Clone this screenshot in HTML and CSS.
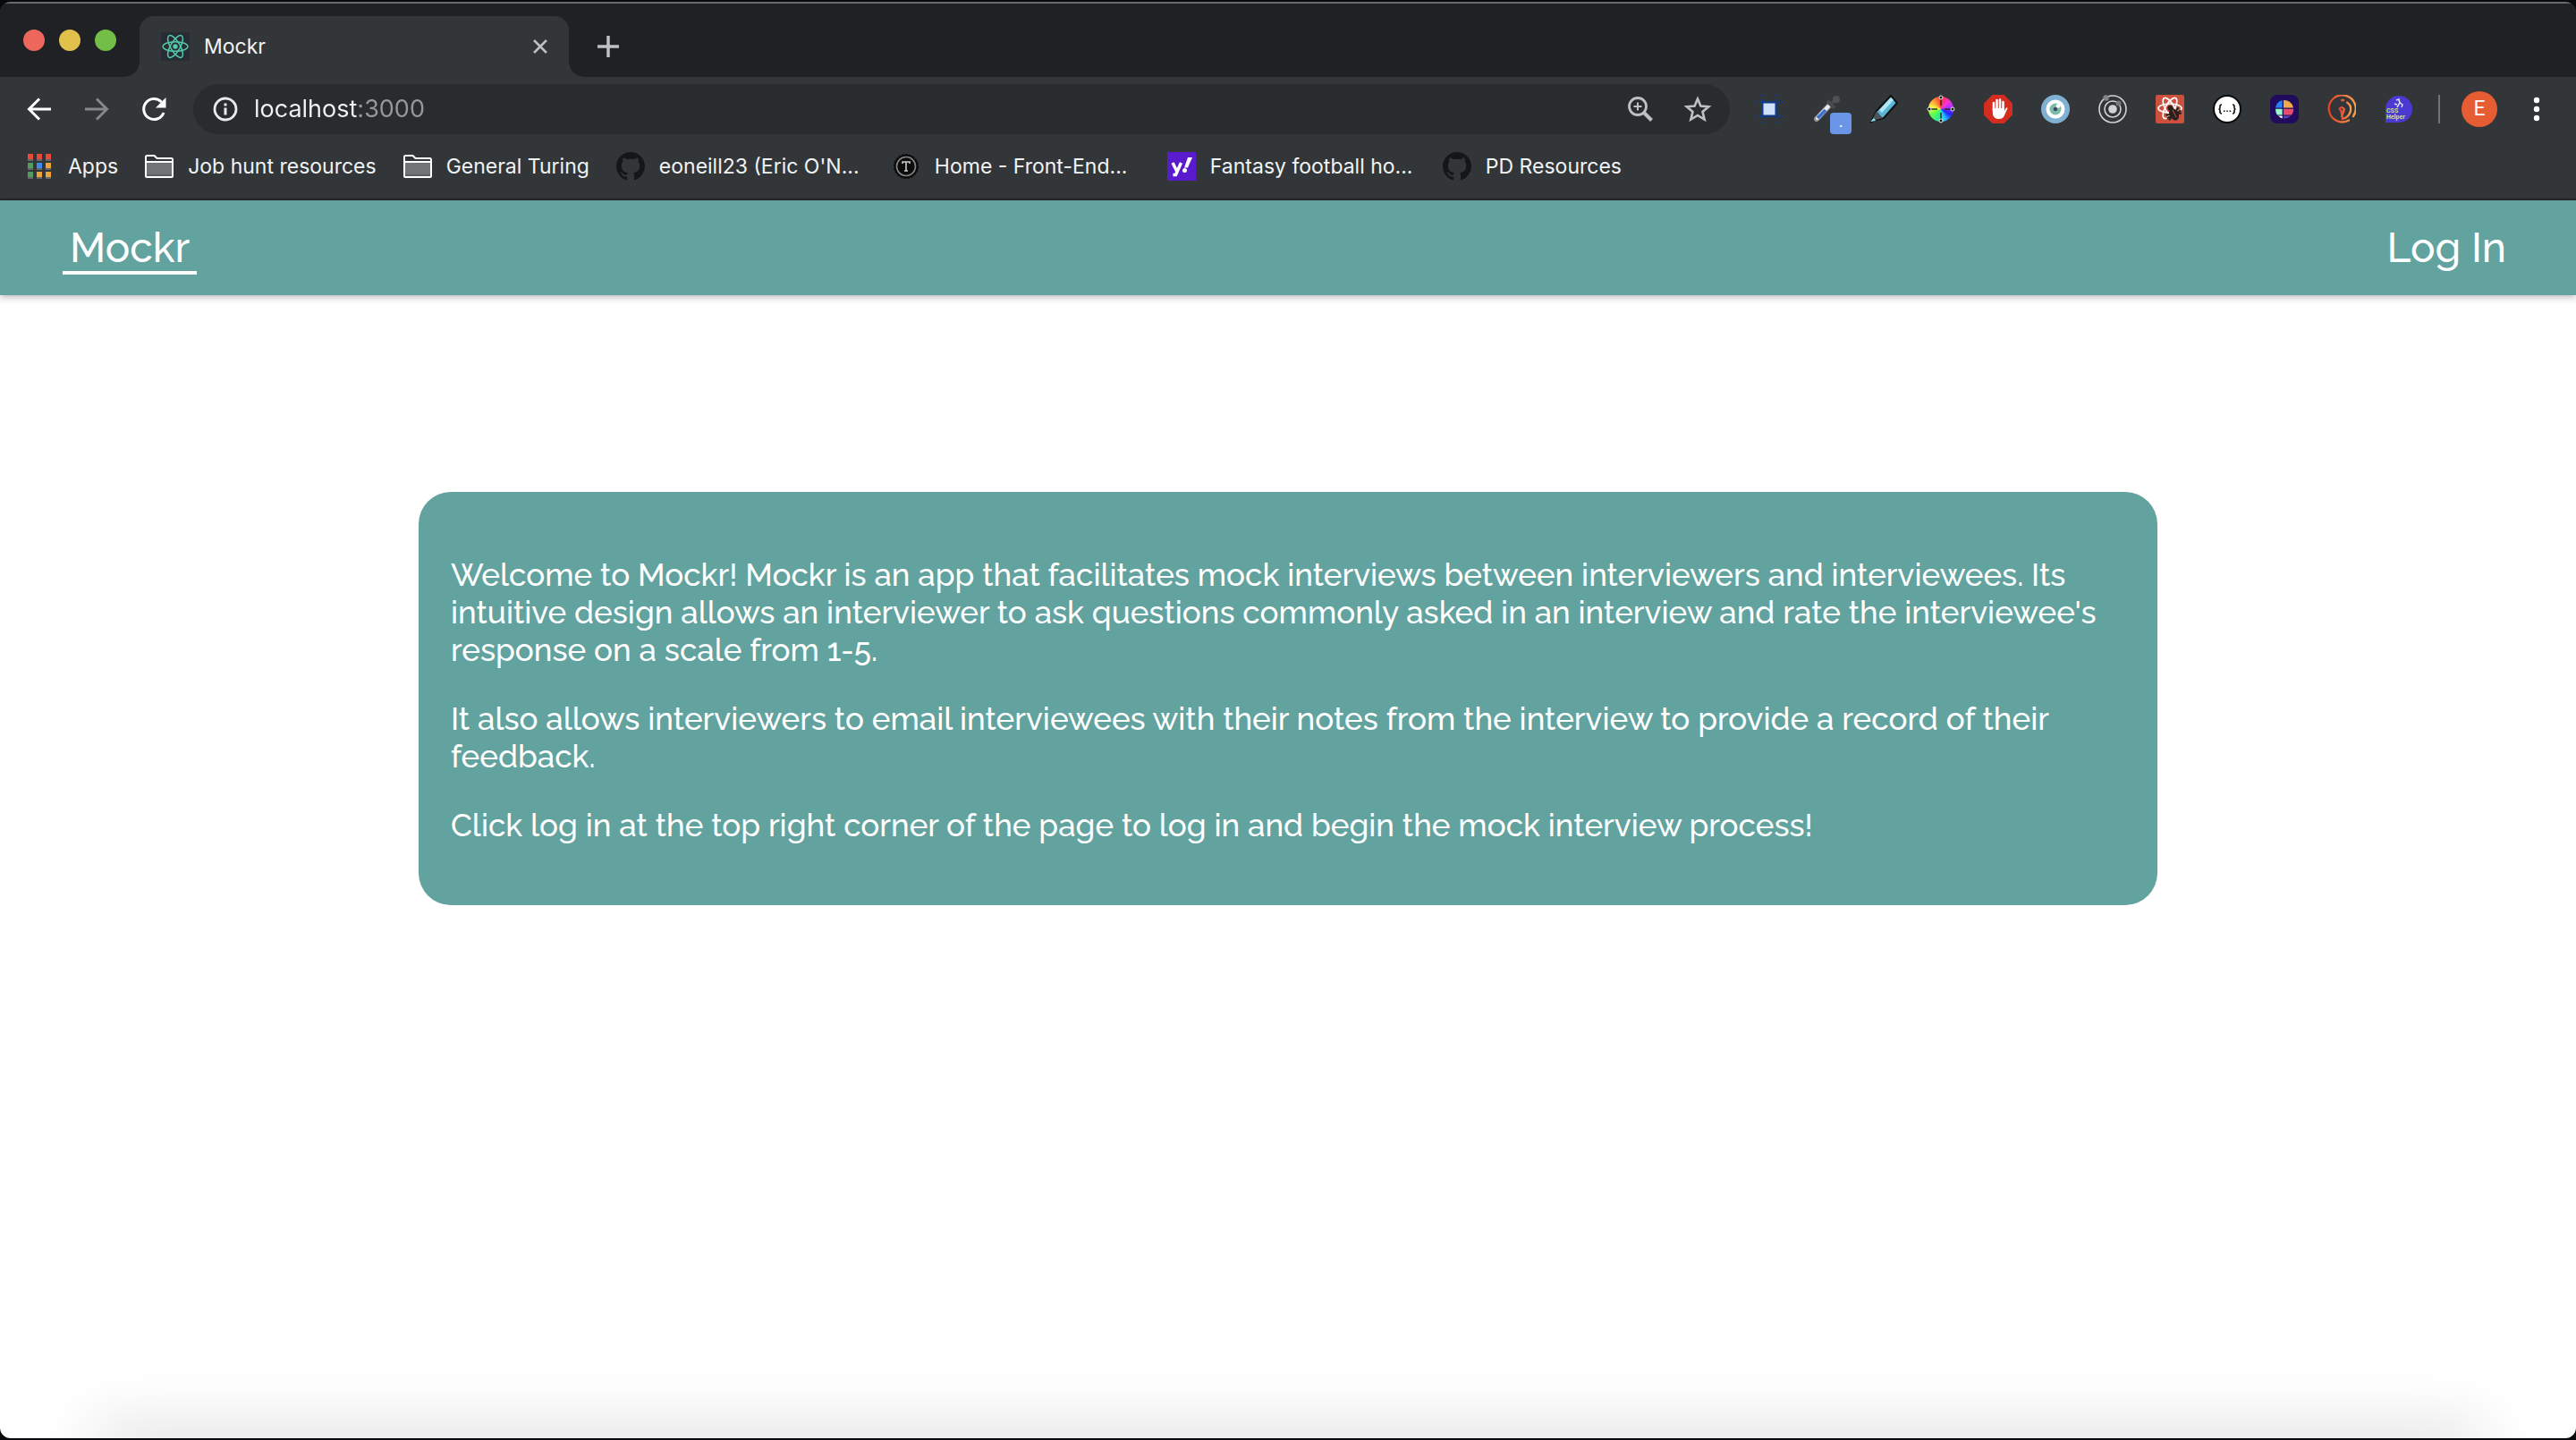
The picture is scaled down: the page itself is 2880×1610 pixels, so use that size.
FILE: index.html
```html
<!DOCTYPE html>
<html lang="en">
<head>
<meta charset="utf-8">
<meta name="viewport" content="width=device-width, initial-scale=1">
<title>Mockr</title>
<link rel="stylesheet" href="styles.css">
</head>
<body>
<svg class="sprite" aria-hidden="true">
  <symbol id="octocat" viewBox="0 0 16 16"><path d="M8 0C3.58 0 0 3.58 0 8c0 3.54 2.29 6.53 5.47 7.59.4.07.55-.17.55-.38 0-.19-.01-.82-.01-1.49-2.01.37-2.53-.49-2.69-.94-.09-.23-.48-.94-.82-1.13-.28-.15-.68-.52-.01-.53.63-.01 1.08.58 1.23.82.72 1.21 1.87.87 2.33.66.07-.52.28-.87.51-1.07-1.78-.2-3.64-.89-3.64-3.95 0-.87.31-1.59.82-2.15-.08-.2-.36-1.02.08-2.12 0 0 .67-.21 2.2.82.64-.18 1.32-.27 2-.27s1.36.09 2 .27c1.53-1.04 2.2-.82 2.2-.82.44 1.1.16 1.92.08 2.12.51.56.82 1.27.82 2.15 0 3.07-1.87 3.75-3.65 3.95.29.25.54.73.54 1.48 0 1.07-.01 1.93-.01 2.2 0 .21.15.46.55.38A8.01 8.01 0 0 0 16 8c0-4.42-3.58-8-8-8z" fill="#161616"/></symbol>
  <symbol id="folder" viewBox="0 0 32 32"><path d="M1 27V5.500q0-1.500 1.500-1.500h8l3 3H29.500q1.500 0 1.500 1.500V27q0 1-1 1H2q-1 0-1-1z" fill="#323639"/><path d="M2 11h28v16H2z" fill="#707477"/><path d="M2 25h28v2H2z" fill="#5c5f62"/><path d="M1 27V5.500q0-1.500 1.500-1.500h8l3 3H29.500q1.500 0 1.500 1.500V27q0 1-1 1H2q-1 0-1-1zM1 11h30" fill="none" stroke="#fff" stroke-width="2"/></symbol>
</svg>
<div class="window">
  <div class="tabstrip">
    <div class="lights">
      <button class="light light-close" aria-label="Close window"></button>
      <button class="light light-min" aria-label="Minimize window"></button>
      <button class="light light-max" aria-label="Zoom window"></button>
    </div>
    <div class="tab">
      <svg class="icon" viewBox="0 0 32 32"><path d="M0 0h32v32H0z" fill="#282c34"/><g fill="none" stroke="#53c9a8" stroke-width="1.500"><ellipse cx="16" cy="16" rx="14" ry="5.300"/><ellipse cx="16" cy="16" rx="14" ry="5.300" transform="rotate(60 16 16)"/><ellipse cx="16" cy="16" rx="14" ry="5.300" transform="rotate(120 16 16)"/></g><circle cx="16" cy="16" r="2.700" fill="#53c9a8"/></svg>
      <span class="tab-title">Mockr</span>
      <button class="tab-close" aria-label="Close tab"><svg viewBox="0 0 16 16" width="16" height="16"><path d="M1 1l14 14M15 1L1 15" stroke="#bdc1c4" stroke-width="2.500"/></svg></button>
    </div>
    <button class="new-tab" aria-label="New tab"><svg viewBox="0 0 24 24" width="24" height="24"><path d="M12 0v24M0 12h24" stroke="#bdc1c4" stroke-width="3.500"/></svg></button>
  </div>

  <div class="toolbar">
    <nav class="nav-buttons" aria-label="History">
      <button class="tool" aria-label="Back"><svg class="icon" viewBox="0 0 32 32"><path d="M29 16H5M16 4.500L4.500 16 16 27.500" fill="none" stroke="#fff" stroke-width="3"/></svg></button>
      <button class="tool" aria-label="Forward"><svg class="icon" viewBox="0 0 32 32"><path d="M3 16h24M16 4.500L27.500 16 16 27.500" fill="none" stroke="#85888a" stroke-width="3"/></svg></button>
      <button class="tool" aria-label="Reload"><svg class="icon" viewBox="0 0 32 32"><path d="M27 20A11.500 11.500 0 1 1 24.500 8" fill="none" stroke="#fff" stroke-width="3"/><path d="M29.500 3v11.500H18z" fill="#fff"/></svg></button>
    </nav>
    <div class="omnibox">
      <svg class="icon" viewBox="0 0 32 32"><circle cx="16" cy="16" r="12" fill="none" stroke="#e8eaed" stroke-width="2.800"/><path d="M14.500 9.500h3v3h-3zM14.500 14.500h3v8h-3z" fill="#e8eaed"/></svg>
      <input class="url" type="text" value="localhost:3000" aria-label="Address">
      <button class="tool" aria-label="Zoom"><svg class="icon" viewBox="0 0 32 32"><g fill="none" stroke="#bdc1c4" stroke-width="2.800"><circle cx="13" cy="13" r="9.500"/><path d="M20 20l8.500 8.500" stroke-width="4"/><path d="M13 8.500v9M8.500 13h9" stroke-width="2"/></g></svg></button>
      <button class="tool" aria-label="Bookmark this page"><svg class="icon" viewBox="0 0 32 32"><path d="M16 4.500l3.400 8 8.800.7-6.700 5.700 2.100 8.600L16 23l-7.600 4.500 2.100-8.600-6.700-5.700 8.800-.7z" fill="none" stroke="#bdc1c4" stroke-width="2.600"/></svg></button>
    </div>
    <div class="extensions">
      <button class="tool" aria-label="Box model"><svg class="icon" viewBox="0 0 32 32"><path d="M8 0v32M24 0v32M0 8h32M0 24h32" stroke="#0c3b8c" stroke-width="2" stroke-dasharray="2 3"/><path d="M8.500 8.500h15v15h-15z" fill="#cfe0fb" stroke="#0c3b8c" stroke-width="2"/></svg></button>
      <button class="tool" aria-label="Color picker"><svg class="icon" viewBox="0 0 32 32"><path d="M5 27L20 11" stroke="#92969b" stroke-width="6" stroke-linecap="round"/><path d="M6 26L18 13" stroke="#e9edf2" stroke-width="4" stroke-linecap="round"/><path d="M6 26l9-9" stroke="#3d70ce" stroke-width="3.500"/><path d="M17 7l8 8M20 12l6-7" stroke="#4a4a4a" stroke-width="4"/><circle cx="27" cy="5" r="4" fill="#515151"/></svg><span class="badge">.</span></button>
      <button class="tool" aria-label="Highlighter"><svg class="icon" viewBox="0 0 32 32"><path d="M8 18L24 1l7 8-15 17-9 2-5 2z" fill="#58b6d8" stroke="#111" stroke-width="2"/><path d="M11 17L24 3l3 3-13 14z" fill="#b4e5f3"/><path d="M8 18l7 8-8 2-5 2z" fill="#4c555c"/><path d="M1 30l4-4 2 3z" fill="#8eeaf4"/></svg></button>
      <button class="tool" aria-label="Color wheel"><span class="wheel"></span><svg class="icon wheel-marks" viewBox="0 0 32 32"><path d="M16 3v9M16 20v9M3 16h9M20 16h9" stroke="#222" stroke-opacity=".7" stroke-width="2"/><g fill="#111" stroke="#eee"><circle cx="16" cy="3" r="2"/><circle cx="16" cy="29" r="2"/><circle cx="3" cy="16" r="2"/><circle cx="29" cy="16" r="2"/></g></svg></button>
      <button class="tool" aria-label="Ad blocker"><svg class="icon" viewBox="0 0 32 32"><path d="M9.500 0h13L32 9.500v13L22.500 32h-13L0 22.500v-13z" fill="#d52c20"/><path d="M11 17V9M14.500 16V6M18 16V5.500M21.500 18V8" fill="none" stroke="#fff" stroke-width="2.600" stroke-linecap="round"/><path d="M9.700 15h13v4l1.800-4q1-1.500 2 0l-4 9q-1.500 3-5.500 3-6 0-7-5z" fill="#fff"/></svg></button>
      <button class="tool" aria-label="Eye"><svg class="icon" viewBox="0 0 32 32"><circle cx="16" cy="16" r="16" fill="#80b0d2"/><circle cx="16" cy="16" r="10.500" fill="#fff"/><circle cx="16" cy="16" r="6.500" fill="#7bbca8"/><circle cx="16" cy="16" r="2.300" fill="#3f4a6a"/><circle cx="19" cy="12.500" r="2.300" fill="#fff"/></svg></button>
      <button class="tool" aria-label="Orbit"><svg class="icon" viewBox="0 0 32 32"><g fill="none" stroke="#d2d2d2" stroke-width="1.600"><circle cx="16" cy="16" r="15"/><circle cx="16" cy="16" r="9"/></g><circle cx="16" cy="16" r="4.800" fill="#d2d2d2"/><circle cx="8.500" cy="3.500" r="3.200" fill="#858585"/><circle cx="22.500" cy="9.500" r="3" fill="#777"/></svg></button>
      <button class="tool" aria-label="React developer tools"><svg class="icon" viewBox="0 0 32 32"><rect width="32" height="32" rx="2" fill="#cc503e"/><g fill="none" stroke="#fff" stroke-width="1.700"><ellipse cx="16" cy="15" rx="13" ry="5"/><ellipse cx="16" cy="15" rx="13" ry="5" transform="rotate(60 16 15)"/><ellipse cx="16" cy="15" rx="13" ry="5" transform="rotate(120 16 15)"/></g><g transform="rotate(-30 20 21)" fill="#2a211f"><ellipse cx="20" cy="22" rx="5" ry="7"/><circle cx="20" cy="14" r="3"/><path d="M12 18l16 7M28 18l-16 7M11 22h18" stroke="#2a211f" stroke-width="2"/></g><path d="M19 17l4 8" stroke="#cc503e"/></svg></button>
      <button class="tool" aria-label="JSON formatter"><svg class="icon" viewBox="0 0 32 32"><circle cx="16" cy="16" r="15" fill="#fff" stroke="#0a0a0a" stroke-width="2"/><g fill="none" stroke="#111" stroke-width="1.600"><path d="M10 11q-2 0-2 2v1.500q0 1.500-1.500 1.500 1.500 0 1.500 1.500V19q0 2 2 2M22 11q2 0 2 2v1.500q0 1.500 1.500 1.500-1.500 0-1.500 1.500V19q0 2-2 2"/></g><path d="M12 17.500h1.500v1.500H12zM15.300 17.500h1.500v1.500h-1.500zM18.600 17.500h1.500v1.500h-1.500z" fill="#111"/></svg></button>
      <button class="tool" aria-label="Palette"><svg class="icon" viewBox="0 0 32 32"><rect width="32" height="32" rx="8" fill="#210b5c"/><path d="M13.700 6v8.500H6A10.300 10.300 0 0 1 13.700 6z" fill="#2780f5"/><path d="M15 6a10.300 10.300 0 0 1 11 8.500H15z" fill="#edaa47"/><path d="M6 15.700h7.700v6.800H8Q6 20 6 15.700z" fill="#98f8ca"/><path d="M15 15.700h11.300q0 4-2.300 6.800h-9z" fill="#ea4c70"/><path d="M9 23.500h4.700v3Q11 25.500 9 23.500z" fill="#fff"/><path d="M15 23.500h8q-3 3.300-8 3z" fill="#5c40b8"/></svg></button>
      <button class="tool" aria-label="Fingerprint"><svg class="icon" viewBox="0 0 32 32"><defs><linearGradient id="flame"><stop stop-color="#e8402a"/><stop offset="1" stop-color="#f5a351"/></linearGradient></defs><g fill="none" stroke="url(#flame)" stroke-width="2.300" stroke-linecap="round"><path d="M24 28.500A15 15 0 1 1 29 24"/><path d="M16 6h2M22 8.500q5 3 4 9-1 7-9 9.500l-1.500-9q-4-3 .5-4 4 1 2 5l-2 5"/></g></svg></button>
      <button class="tool" aria-label="CSS helper"><svg class="icon" viewBox="0 0 32 32"><path d="M1 31V16A15 15 0 1 1 16 31z" fill="#4b39d2"/><path d="M13 6l3-1 1 4-3 5M16 8l4 3-1 3M11 10l3 1" fill="none" stroke="#dde" stroke-width="1.500"/><text class="css-mark" x="2" y="20">CSS</text><text class="css-mark" x="2" y="27">Helper</text></svg></button>
    </div>
    <span class="divider"></span>
    <button class="avatar" aria-label="Profile">E</button>
    <button class="tool menu" aria-label="Menu"><svg class="icon" viewBox="0 0 32 32"><g fill="#fff"><circle cx="16" cy="6" r="3.200"/><circle cx="16" cy="16" r="3.200"/><circle cx="16" cy="26" r="3.200"/></g></svg></button>
  </div>

  <nav class="bookmarks" aria-label="Bookmarks">
    <a class="bookmark" href="#"><svg class="icon" viewBox="0 0 32 32"><path d="M3 9h6M13 9h6M23 9h6M3 19h6M13 19h6M23 19h6M3 29h6M13 29h6M23 29h6" stroke="#96999b"/><path d="M3 2h6v6H3zM13 2h6v6h-6zM23 2h6v6h-6z" fill="#e74a3b"/><path d="M3 12h6v6H3zM3 22h6v6H3z" fill="#529c5d"/><path d="M13 12h6v6h-6z" fill="#4088ed"/><path d="M23 12h6v6h-6zM13 22h6v6h-6zM23 22h6v6h-6z" fill="#e9a337"/></svg>Apps</a>
    <a class="bookmark" href="#"><svg class="icon"><use href="#folder"/></svg>Job hunt resources</a>
    <a class="bookmark" href="#"><svg class="icon"><use href="#folder"/></svg>General Turing</a>
    <a class="bookmark bookmark-long" href="#"><svg class="icon"><use href="#octocat"/></svg>eoneill23 (Eric O'N...</a>
    <a class="bookmark bookmark-long" href="#"><svg class="icon" viewBox="0 0 32 32"><circle cx="16" cy="16" r="13" fill="#0c0c0c" stroke="#0c0c0c" stroke-width="2" stroke-dasharray="3 1"/><circle cx="16" cy="16" r="10.500" fill="none" stroke="#858585" stroke-width="1.600"/><path d="M12 13v-2h8v2M16 11v10M14 21h4" fill="none" stroke="#ccc" stroke-width="1.600"/></svg>Home - Front-End...</a>
    <a class="bookmark bookmark-long" href="#"><svg class="icon" viewBox="0 0 32 32"><path d="M0 0h32v32H0z" fill="#5a1bce"/><path d="M6 12l4.500 9M15.500 12L9.500 25.500H6.500" fill="none" stroke="#fff" stroke-width="3.500"/><path d="M23 6h5l-5 11.500h-4z" fill="#fff"/><circle cx="19.500" cy="20.500" r="2.500" fill="#fff"/></svg>Fantasy football ho...</a>
    <a class="bookmark" href="#"><svg class="icon"><use href="#octocat"/></svg>PD Resources</a>
  </nav>

  <div class="page">
    <header class="site-header">
      <a class="site-link site-link-active" href="#">Mockr</a>
      <a class="site-link" href="#">Log In</a>
    </header>
    <main class="content">
      <section class="welcome">
        <p>Welcome to Mockr! Mockr is an app that facilitates mock interviews between interviewers and interviewees. Its intuitive design allows an interviewer to ask questions commonly asked in an interview and rate the interviewee's response on a scale from 1-5.</p>
        <p>It also allows interviewers to email interviewees with their notes from the interview to provide a record of their feedback.</p>
        <p>Click log in at the top right corner of the page to log in and begin the mock interview process!</p>
      </section>
    </main>
    <div class="bottom-shade"></div>
  </div>
</div>
</body>
</html>
```
FILE: styles.css
```css
* { box-sizing: border-box; }

body {
  margin: 0;
  background: #08090c;
  font-family: Inter, Roboto, sans-serif;
  font-size: 23px;
  color: #f1f3f4;
}

button {
  border: 0;
  padding: 0;
  background: none;
  font: inherit;
  color: inherit;
}

a { color: inherit; text-decoration: none; }

.sprite { position: absolute; width: 0; height: 0; }

.icon { display: block; flex: none; width: 32px; height: 32px; }

/* Browser window */
.window {
  display: flex;
  flex-direction: column;
  height: calc(100vh - 4px);
  margin: 2px 0;
  border-radius: 12px;
  overflow: hidden;
  background: #323639;
}

.tabstrip {
  display: flex;
  align-items: flex-end;
  height: 84px;
  border-top: 2px solid #67696b;
  background: #202124;
}

.lights {
  display: flex;
  gap: 16px;
  width: 156px;
  padding: 0 0 29px 26px;
}

.light { width: 24px; height: 24px; border-radius: 50%; }
.light-close { background: #ee675c; }
.light-min { background: #e1c04c; }
.light-max { background: #72be47; }

.tab {
  position: relative;
  display: flex;
  align-items: center;
  gap: 16px;
  width: 480px;
  height: 68px;
  padding: 0 24px;
  border-radius: 16px 16px 0 0;
  background: #323639;
}

/* Flared feet on both sides of the active tab */
.tab::before,
.tab::after {
  content: "";
  position: absolute;
  bottom: 0;
  width: 16px;
  height: 16px;
}
.tab::before { right: 100%; background: radial-gradient(circle at 0 0, #202124 15px, #323639 16px); }
.tab::after { left: 100%; background: radial-gradient(circle at 100% 0, #202124 15px, #323639 16px); }

.tab-title { flex: 1; }
.tab-close { display: flex; }
.new-tab { display: flex; margin: 0 32px 22px; }

/* Toolbar */
.toolbar {
  display: flex;
  align-items: center;
  height: 72px;
  padding: 0 28px;
}

.nav-buttons { display: flex; gap: 32px; }

.tool { position: relative; display: flex; }

.omnibox {
  display: flex;
  flex: 1;
  align-items: center;
  gap: 32px;
  height: 56px;
  margin: 0 28px;
  padding: 0 20px;
  border-radius: 28px;
  background: #292c2f;
}

/* Host is bright, the port after it is dimmed */
.url {
  flex: 1;
  min-width: 0;
  margin-left: -16px;
  padding: 0;
  border: 0;
  background: linear-gradient(90deg, #f1f3f4 117px, #96999c 117px);
  background-clip: text;
  color: transparent;
  font: inherit;
  font-size: 27px;
  line-height: 40px;
}

.extensions { display: flex; gap: 32px; }

.badge {
  position: absolute;
  left: 20px;
  top: 20px;
  width: 24px;
  height: 24px;
  border-radius: 4px;
  background: #6b95e7;
  color: #fff;
  font-size: 16px;
  line-height: 20px;
  text-align: center;
}

.wheel {
  width: 32px;
  height: 32px;
  border: 2px solid #323639;
  border-radius: 50%;
  background: conic-gradient(#f33, #f3c, #a3f, #22f, #2cf, #3e8, #6f4, #ef4, #f93, #f33);
}

.wheel-marks { position: absolute; left: 0; top: 0; }

.css-mark { font: 700 7px Roboto, sans-serif; fill: #c5e86c; }

.divider { width: 2px; height: 32px; margin: 0 24px 0 28px; background: #707477; }

.avatar {
  width: 40px;
  height: 40px;
  border-radius: 50%;
  background: #e65c33;
  color: #fff;
  font-family: Roboto, sans-serif;
  line-height: 40px;
}

.menu { margin-left: 28px; }

/* Bookmarks bar */
.bookmarks {
  display: flex;
  align-items: center;
  gap: 30px;
  height: 66px;
  padding: 0 28px 8px;
  border-bottom: 2px solid #25282a;
}

.bookmark { display: flex; align-items: center; gap: 16px; white-space: nowrap; }
.bookmark-long { width: 278px; }

/* Page */
.page {
  display: flex;
  flex: 1;
  flex-direction: column;
  background: #fff;
  color: #fff;
  font-family: Raleway, Lato, sans-serif;
  font-weight: 500;
}

.site-header {
  display: flex;
  justify-content: space-between;
  align-items: center;
  height: 106px;
  padding: 0 70px;
  background: #62a39f;
  box-shadow: 0 2px 8px rgba(0, 0, 0, 0.3);
}

.site-link {
  padding: 4px 8px 0;
  border-bottom: 4px solid transparent;
  font-size: 46px;
  line-height: 52px;
}
.site-link-active { border-color: #fff; }

.content { flex: 1; padding-top: 220px; }

.welcome {
  display: flex;
  flex-direction: column;
  gap: 35px;
  width: 67.5%;
  margin: 0 auto;
  padding: 72px 36px 68px;
  border-radius: 36px;
  background: #62a39f;
  font-size: 35px;
  font-weight: 550;
  line-height: 42px;
}

.welcome p { margin: 0; }

.bottom-shade {
  margin: 0 120px;
  box-shadow: 0 10px 70px 16px rgba(0, 0, 0, 0.2);
}
```
